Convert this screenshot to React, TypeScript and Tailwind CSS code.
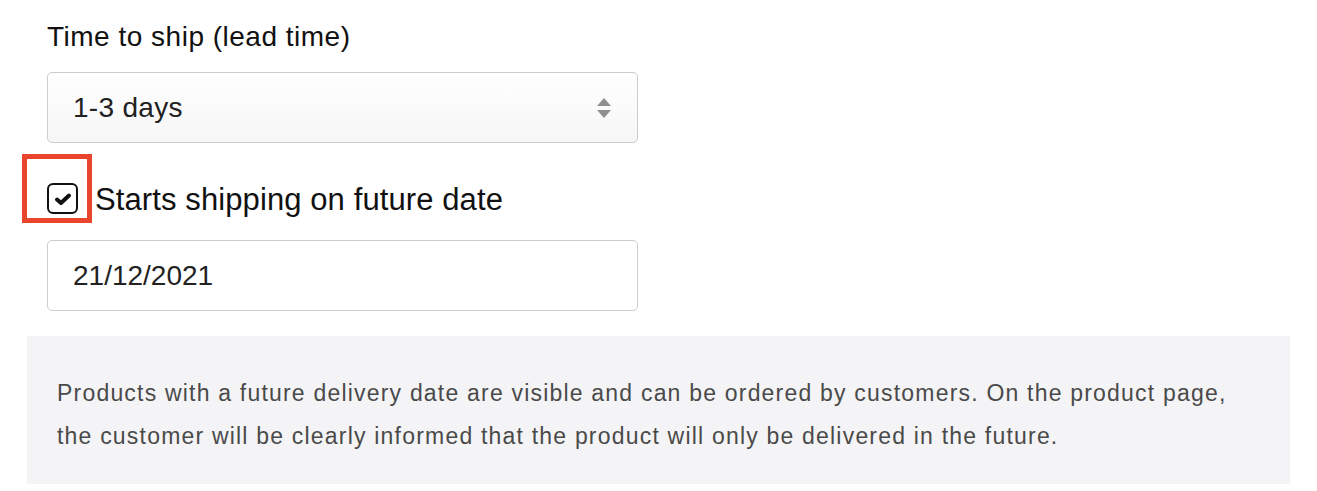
import React from "react";

const font = { fontFamily: '"Liberation Sans", Arial, sans-serif' };

const App: React.FC = () => {
  return (
    <div className="w-[1317px] h-[491px] bg-white overflow-hidden" style={font}>
      <div className="pl-[47px] pt-[21px]">
        <p className="text-[28px] leading-[32px] tracking-[0.5px] text-[#111]">Time to ship (lead time)</p>

        {/* select */}
        <div className="mt-[19px] w-[591px] h-[71px] border border-[#cdcdcd] rounded-[5px] bg-gradient-to-b from-white to-[#f6f6f6] flex items-center justify-between pl-[25px] pr-[25px]">
          <span className="text-[28px] tracking-[0.3px] text-[#222]">1-3 days</span>
          <svg width="16" height="22" viewBox="0 0 16 22">
            <path d="M8 1 L15 9 L1 9 Z" fill="#8f8f8f" />
            <path d="M8 21 L15 13 L1 13 Z" fill="#8f8f8f" />
          </svg>
        </div>

        {/* checkbox row */}
        <div className="relative mt-[40px] flex items-center gap-[17px] h-[31px]">
          <div className="w-[31px] h-[31px] rounded-[6px] border-2 border-[#111] bg-white flex items-center justify-center">
            <svg width="18" height="15" viewBox="0 0 18 15" className="mt-[2px]">
              <path d="M3 7.5 L7 11 L15 3.5" fill="none" stroke="#111" strokeWidth="4" strokeLinecap="round" strokeLinejoin="round" />
            </svg>
          </div>
          <span className="text-[31px] mt-[4px] tracking-[0.1px] text-[#111]">Starts shipping on future date</span>
          <div className="absolute left-[-25px] top-[-29px] w-[70px] h-[69px] border-[5px] border-[#e8452c]" />
        </div>

        {/* date input */}
        <div className="mt-[26px] w-[591px] h-[71px] border border-[#cdcdcd] rounded-[5px] bg-white flex items-center pl-[25px]">
          <span className="text-[28px] text-[#222]">21/12/2021</span>
        </div>
      </div>

      {/* info box */}
      <div className="ml-[27px] mt-[25px] w-[1263px] bg-[#f4f4f6] pt-[36px] pb-[26px] pl-[30px] pr-[20px]">
        <p className="text-[23px] leading-[43px] text-[#4a4a4a] tracking-[1.2px] whitespace-nowrap">
          Products with a future delivery date are visible and can be ordered by customers. On the product page,
          <br />
          the customer will be clearly informed that the product will only be delivered in the future.
        </p>
      </div>
    </div>
  );
};

export default App;
